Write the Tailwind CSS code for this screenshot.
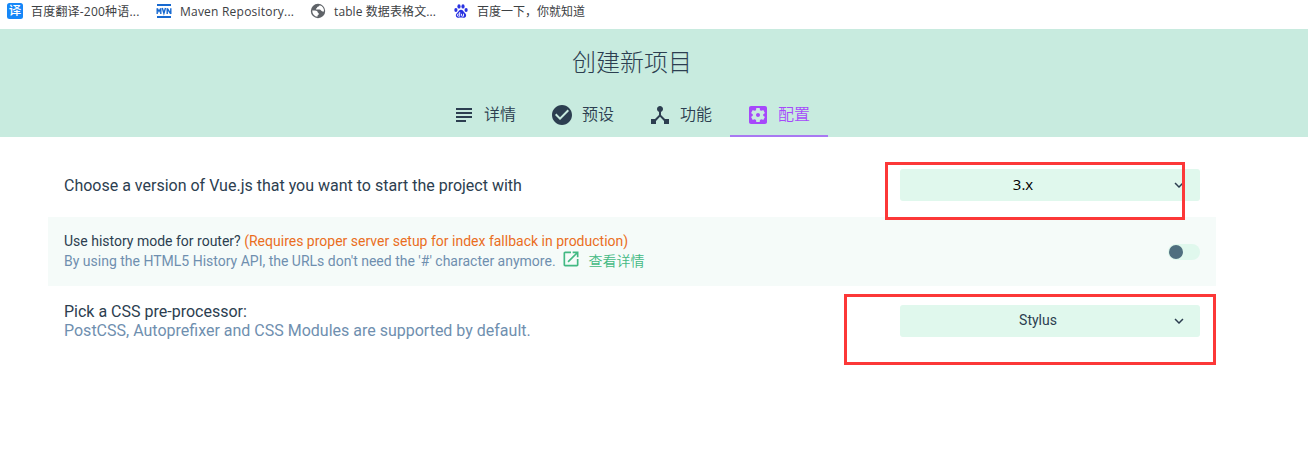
<!DOCTYPE html>
<html lang="zh-CN">
<head>
<meta charset="utf-8">
<title>创建新项目</title>
<script src="https://cdn.jsdelivr.net/npm/@tailwindcss/browser@4"></script>
</head>
<body class="relative h-[471px] overflow-hidden bg-white font-['Roboto','Noto_Sans_CJK_SC',sans-serif] text-[#2c3e50]">
<!-- bookmarks bar -->
<nav class="flex h-[29px] pl-[7px] font-['Open_Sans','Noto_Sans_CJK_SC',sans-serif] text-xs leading-6 text-[#3c4043] whitespace-nowrap">
  <a class="flex w-[149px] gap-2">
    <svg class="mt-[3px] h-4 w-4 shrink-0" viewBox="0 0 16 16"><rect width="16" height="16" rx="2.5" fill="#1687f8"/><text x="8" y="12.4" text-anchor="middle" font-size="12.5" font-weight="500" fill="#fff">译</text></svg>
    <span class="tracking-[0.2px]">百度翻译-200种语...</span></a>
  <a class="flex w-[154px] gap-2">
    <svg class="mt-[3px] h-4 w-4 shrink-0" viewBox="0 0 16 16"><path fill="#1769d0" d="M1 1h14v2H1zM1 13h14v2H1z"/><path fill="none" stroke="#1769d0" stroke-width="1.4" d="M1.2 11V5.300M4.800 5.300V11M1.400 5.500L3 8.500l1.600-3M6.300 5l1.600 5.300L9.500 5M11.200 11V5.300M14.800 11V5.300M11.300 5.500l3.400 5.300"/></svg>
    <span class="tracking-[0.22px]">Maven Repository...</span></a>
  <a class="flex w-[143px] gap-2">
    <svg class="mt-[3px] h-4 w-4 shrink-0" viewBox="0 0 16 16"><circle cx="8" cy="8" r="7.200" fill="#5f6368"/><path fill="#fff" d="M9.500 2.300c-.2 1-.7 1.300-1.700 1.400-.7.100-.8.700-.7 1.300-.8.300-1.400.7-1.100 1.600h3.500c1.500 0 1.700 1.800 3 1.800H14A6 6 0 0 0 9.500 2.300zM2.200 7.600c2.200-.1 5.300-.1 5.500 1.700.1 1 1.200.7 1.200 1.700 0 .9-1.600.6-1.500 2.700A6 6 0 0 1 2.200 7.600z"/></svg>
    <span class="tracking-[0.1px]">table 数据表格文...</span></a>
  <a class="flex gap-2">
    <svg class="mt-[3px] h-4 w-4 shrink-0" viewBox="0 0 16 16" fill="#2932e1"><ellipse cx="2.900" cy="7" rx="1.600" ry="2.100"/><ellipse cx="6" cy="3.400" rx="1.600" ry="2.200"/><ellipse cx="10" cy="3.400" rx="1.600" ry="2.200"/><ellipse cx="13.100" cy="7" rx="1.600" ry="2.100"/><path d="M8 6.800c1.900 0 2.400 1.800 3.700 2.900 1.600 1.300 1.700 2.500 1.200 3.800-.6 1.600-2.500 1.300-4.900 1.100-2.400.2-4.300.5-4.900-1.100-.5-1.300-.4-2.500 1.200-3.800C5.600 8.600 6.100 6.800 8 6.800z"/><path fill="none" stroke="#fff" stroke-width=".9" d="M6.700 9v4.200H5.500a1 1 0 0 1 0-2.200h1.200M8.500 10.800v1.700q0 .7.700.7h1.300v-2.500"/></svg>
    <span>百度一下，你就知道</span></a>
</nav>

<!-- project wizard header -->
<header class="flex h-[108px] flex-col bg-[#c8ebdf] pr-11">
  <h1 class="h-16 text-center text-2xl leading-[68px] font-light">创建新项目</h1>
  <div class="flex h-11 justify-center text-base">
    <div class="flex w-[98px] items-center gap-2 pl-4"><svg class="h-6 w-6" viewBox="0 0 24 24" fill="currentColor"><path d="M14 17H4v2h10v-2zm6-8H4v2h16V9zM4 15h16v-2H4v2zM4 5v2h16V5H4z"/></svg><span class="font-[350]">详情</span></div>
    <div class="flex w-[98px] items-center gap-2 pl-4"><svg class="h-6 w-6" viewBox="0 0 24 24" fill="currentColor"><path d="M12 2C6.480 2 2 6.480 2 12s4.480 10 10 10 10-4.480 10-10S17.520 2 12 2zm-2 15l-5-5 1.410-1.410L10 14.170l7.590-7.590L19 8l-9 9z"/></svg><span class="font-[350]">预设</span></div>
    <div class="flex w-[98px] items-center gap-2 pl-4"><svg class="h-6 w-6" viewBox="0 0 24 24" fill="currentColor"><path d="M17 16l-4-4V8.820C14.160 8.400 15 7.300 15 6c0-1.660-1.340-3-3-3S9 4.340 9 6c0 1.300.84 2.400 2 2.820V12l-4 4H3v5h5v-3.050l4-4.200 4 4.200V21h5v-5h-4z"/></svg><span class="font-[350]">功能</span></div>
    <div class="flex w-[98px] items-center gap-2 border-b-2 border-[#a879f2] pt-0.5 pl-4 text-[#a649fb]"><svg class="h-6 w-6" viewBox="0 0 24 24" fill="currentColor"><path d="M12 10c-1.100 0-2 .9-2 2s.9 2 2 2 2-.9 2-2-.9-2-2-2zm7-7H5c-1.110 0-2 .9-2 2v14c0 1.100.89 2 2 2h14c1.110 0 2-.9 2-2V5c0-1.100-.89-2-2-2zm-1.750 9c0 .23-.02.46-.05.680l1.480 1.160c.13.110.17.300.08.450l-1.400 2.420c-.09.150-.27.210-.43.150l-1.740-.7c-.36.280-.76.510-1.180.690l-.26 1.850c-.03.170-.18.300-.35.300h-2.800c-.17 0-.32-.13-.35-.29l-.26-1.850c-.43-.18-.82-.41-1.180-.69l-1.740.7c-.16.060-.34 0-.43-.15l-1.400-2.420c-.09-.15-.05-.34.080-.45l1.480-1.160c-.03-.23-.05-.46-.05-.69 0-.23.020-.46.050-.68l-1.480-1.160c-.13-.11-.17-.3-.08-.45l1.400-2.420c.09-.15.270-.21.430-.15l1.740.7c.36-.28.760-.51 1.180-.69l.26-1.850c.03-.17.180-.3.350-.3h2.800c.17 0 .32.130.35.290l.26 1.850c.43.180.82.410 1.180.690l1.740-.7c.16-.06.340 0 .430.150l1.400 2.420c.09.150.05.340-.08.450l-1.480 1.160c.03.230.05.460.05.690z"/></svg><span class="font-[350]">配置</span></div>
  </div>
</header>

<!-- prompts -->
<main class="ml-12 w-[1168px] pt-4">
  <section class="flex h-16 items-center justify-between px-4">
    <p class="pt-0.5 text-base leading-5">Choose a version of Vue.js that you want to start the project with</p>
    <div class="flex h-8 w-[300px] items-center rounded-[3px] bg-[#e0f8ed] pr-3">
      <span class="flex-1 pr-6 pb-0.5 text-center font-['Open_Sans',sans-serif] text-[15px] text-black">3.x</span>
      <svg class="h-[18px] w-[18px]" viewBox="0 0 24 24" fill="currentColor"><path d="M7.410 8.590L12 13.170l4.590-4.580L18 10l-6 6-6-6 1.410-1.410z"/></svg>
    </div>
  </section>
  <section class="flex h-[69px] items-center justify-between bg-[#f5fbf9] px-4">
    <div class="pb-0.5 text-sm leading-5">
      <p>Use history mode for router? <span class="text-[#ea6e1e]">(Requires proper server setup for index fallback in production)</span></p>
      <p class="flex text-[#6f8faf]"><span>By using the HTML5 History API, the URLs don't need the '#' character anymore.</span><a class="ml-[5px] flex text-[#42b983]"><svg class="-mt-0.5 mr-2 h-5 w-5" viewBox="0 0 24 24" fill="currentColor"><path d="M19 19H5V5h7V3H5c-1.110 0-2 .9-2 2v14c0 1.100.89 2 2 2h14c1.100 0 2-.9 2-2v-7h-2v7zM14 3v2h3.590l-9.830 9.830 1.410 1.410L19 6.410V10h2V3h-7z"/></svg><span class="font-[350]">查看详情</span></a></p>
    </div>
    <div class="h-4 w-8 rounded-full bg-[#e0f8ed] p-px"><div class="h-3.5 w-3.5 rounded-full bg-[#4f6f7f]"></div></div>
  </section>
  <section class="flex h-[70px] items-center justify-between px-4">
    <div class="text-base leading-[19px]"><p>Pick a CSS pre-processor:</p><p class="text-[#6f8faf]">PostCSS, Autoprefixer and CSS Modules are supported by default.</p></div>
    <div class="flex h-8 w-[300px] items-center rounded-[3px] bg-[#e0f8ed] pr-3">
      <span class="flex-1 pb-0.5 pl-[6px] text-center text-sm">Stylus</span>
      <svg class="h-[18px] w-[18px]" viewBox="0 0 24 24" fill="currentColor"><path d="M7.410 8.590L12 13.170l4.590-4.580L18 10l-6 6-6-6 1.410-1.410z"/></svg>
    </div>
  </section>
</main>

<!-- annotation frames -->
<div class="absolute top-[162px] left-[885px] h-[58px] w-[300px] border-3 border-[#fc3838]"></div>
<div class="absolute top-[294px] left-[844px] h-[71px] w-[372px] border-3 border-[#fc3838]"></div>
</body>
</html>
